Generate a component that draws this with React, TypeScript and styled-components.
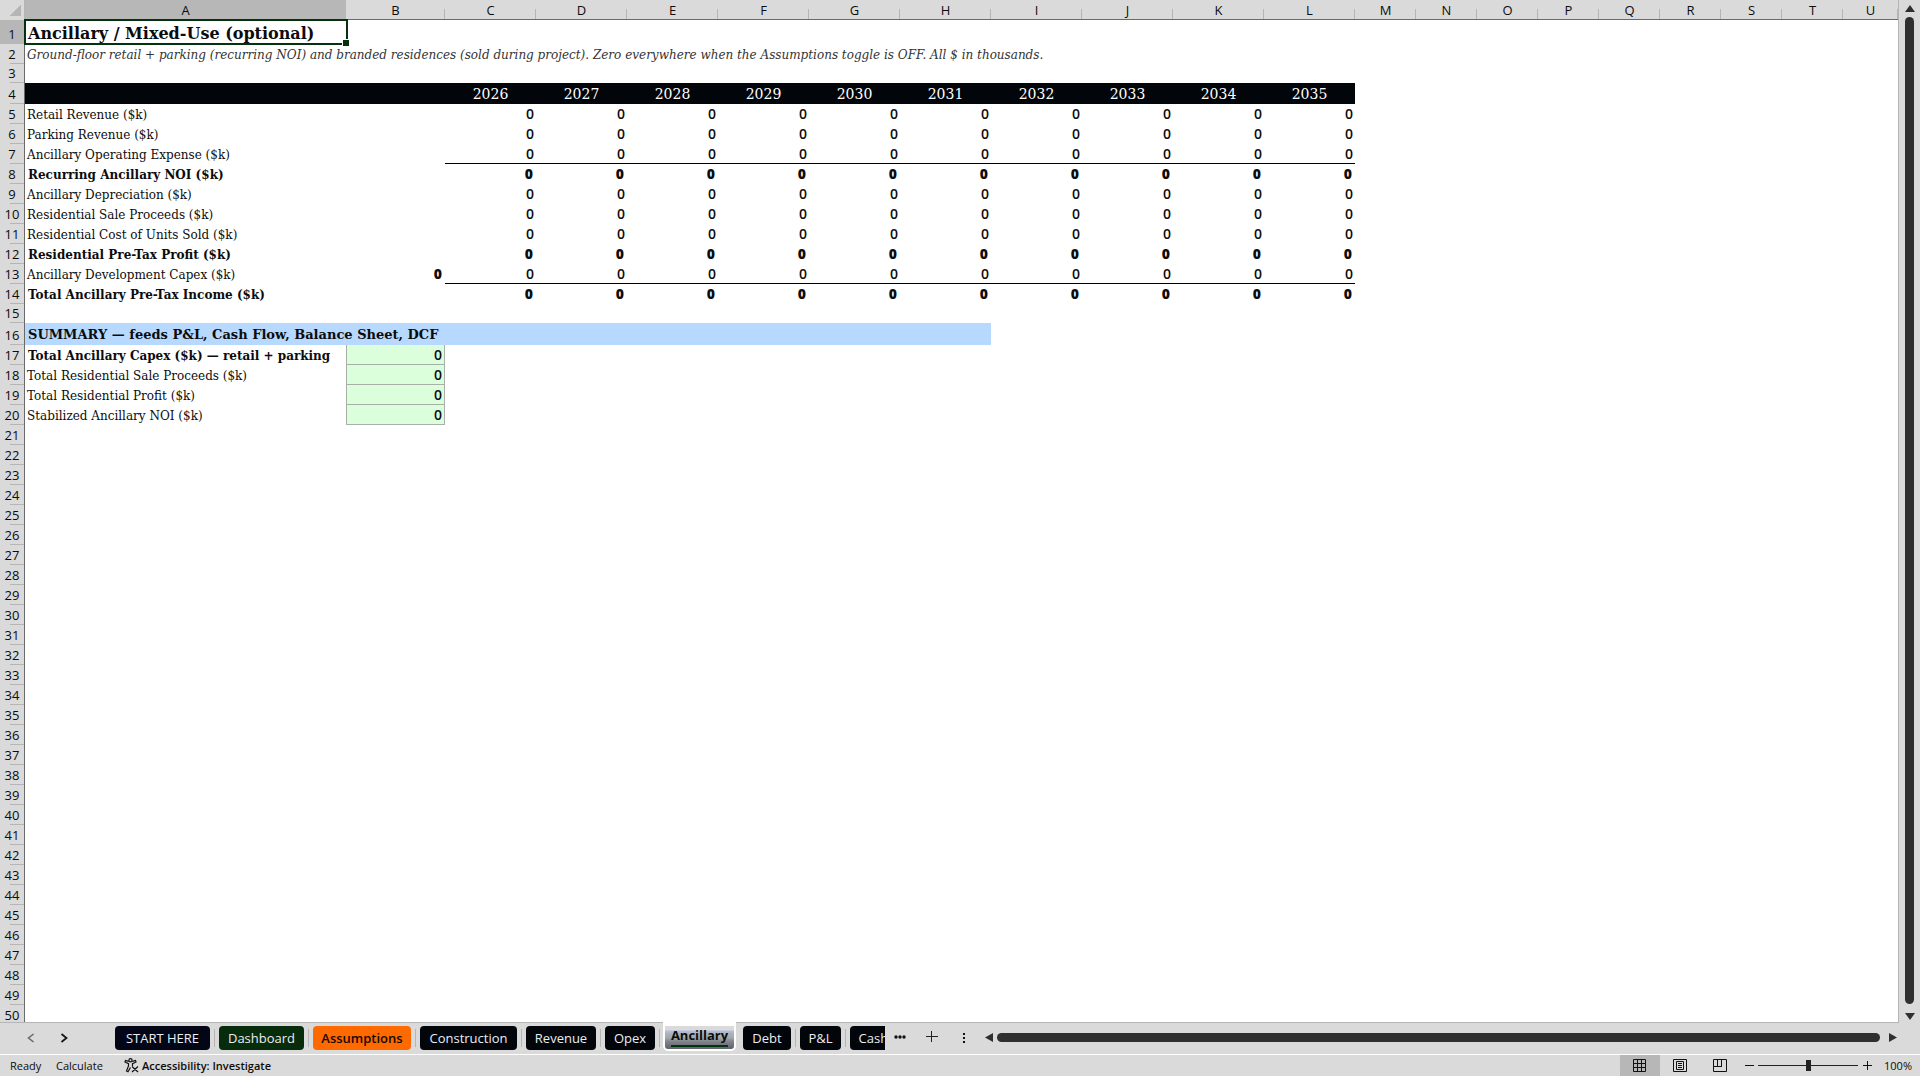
import React from "react";
import styled, { createGlobalStyle, css } from "styled-components";

const UI = '"Open Sans", "Noto Sans", sans-serif';
const SERIF = '"DejaVu Serif", "Liberation Serif", serif';
const CHROME = "#dadada";
const LINE = "#b5b5b5";
const INK = "#2f2f2f";
const GREEN = "#06310f";

const Global = createGlobalStyle`
  * { box-sizing: border-box; }
  html, body { margin: 0; height: 100%; overflow: hidden; }
  body { background: ${CHROME}; font-family: ${UI}; color: #0c0c0c; }
  button { margin: 0; padding: 0; border: 0; background: none; font: inherit; color: inherit; cursor: pointer; }
`;

const Shell = styled.div`
  display: flex;
  flex-direction: column;
  height: 100vh;
`;

const Workspace = styled.div`
  display: flex;
  flex: 1;
  min-height: 0;
`;

const SheetPane = styled.main`
  flex: 1;
  min-width: 0;
  overflow: hidden;
  background: #fff;
  border-right: 1px solid ${LINE};
`;

const Grid = styled.table`
  width: 100%;
  table-layout: fixed;
  border-collapse: separate;
  border-spacing: 0;
  font-size: 13px;
  line-height: 18px;
`;

const Col = styled.col<{ $w?: number }>`
  width: ${(p) => (p.$w ? `${p.$w}px` : "auto")};
`;

const ColHead = styled.th<{ $active?: boolean }>`
  height: 20px;
  padding: 2px 0 0;
  font-weight: 400;
  line-height: 17px;
  border-bottom: 1px solid #6a6a6a;
  background: ${(p) =>
    p.$active
      ? "#b7b7b7"
      : `linear-gradient(${LINE}, ${LINE}) right bottom / 1px 10px no-repeat ${CHROME}`};
`;

const Corner = styled.td`
  padding: 0;
  background: linear-gradient(135deg, transparent 50%, ${LINE} 50%) 10px 5px / 11px 11px no-repeat ${CHROME};
  border-right: 1px solid ${LINE};
`;

const RowHead = styled.th<{ $active?: boolean }>`
  padding: 0 0 1px;
  font-weight: 400;
  line-height: 18px;
  vertical-align: bottom;
  border-right: 1px solid #6a6a6a;
  background: ${(p) =>
    p.$active
      ? "#b7b7b7"
      : `linear-gradient(${LINE}, ${LINE}) right bottom / 14px 1px no-repeat ${CHROME}`};
`;

const Row = styled.tr<{ $h: number }>`
  height: ${(p) => p.$h}px;
`;

type Tone = "plain" | "bold" | "title" | "note" | "section";

const tones = {
  plain: css`font-size: 12px; padding-left: 2px;`,
  bold: css`font-size: 12px; font-weight: 700; padding-left: 3px;`,
  title: css`font-size: 16px; font-weight: 700; padding: 3px 0 0 3px;`,
  note: css`font-size: 12px; font-style: italic; color: #333; padding-left: 2px;`,
  section: css`font-size: 13px; font-weight: 700; padding-left: 3px; background: #b7d9ff;`,
};

const Label = styled.td<{ $tone: Tone }>`
  position: relative;
  padding: 1px 0 0;
  font-family: ${SERIF};
  white-space: nowrap;
  ${(p) => tones[p.$tone]}
`;

const Selection = styled.span`
  position: absolute;
  inset: -1px -2px -1px -1px;
  border: 2px solid ${GREEN};
  &::after {
    content: "";
    position: absolute;
    right: -3px;
    bottom: -3px;
    width: 6px;
    height: 6px;
    background: ${GREEN};
    border: 1px solid #fff;
    border-width: 1px 0 0 1px;
  }
`;

const Value = styled.td<{ $bold?: boolean; $ruled?: boolean; $input?: boolean }>`
  padding: 0 2px 0 0;
  text-align: right;
  font-size: 14px;
  font-weight: ${(p) => (p.$bold ? 800 : 600)};
  ${(p) => p.$bold && "padding-right: 3px;"}
  ${(p) => p.$ruled && "border-bottom: 1px solid #000;"}
  ${(p) =>
    p.$input &&
    "background: #dbffdb; border: 1px solid #a9b0a9; border-top: 0; padding-right: 2px;"}
`;

const Year = styled.th`
  padding: 0;
  background: #02050a;
  color: #fff;
  font-family: ${SERIF};
  font-size: 14px;
  font-weight: 400;
`;

const Blank = styled.td`
  padding: 0;
`;

const VScroll = styled.div`
  display: flex;
  flex-direction: column;
  align-items: center;
  gap: 5px;
  width: 21px;
  padding: 5px 0 2px;
`;

const ArrowButton = styled.button`
  display: flex;
  align-items: center;
  justify-content: center;
  flex: none;
`;

const VThumb = styled.div`
  flex: 1;
  width: 9px;
  margin-bottom: 4px;
  border-radius: 5px;
  background: ${INK};
`;

const TabBar = styled.nav`
  display: flex;
  align-items: stretch;
  height: 33px;
  border-bottom: 1px solid #fff;
  background: linear-gradient(${LINE}, ${LINE}) left top / calc(100% - 21px) 1px no-repeat;
`;

const NavButtons = styled.div`
  display: flex;
  align-items: center;
  gap: 24px;
  width: 115px;
  padding: 0 0 1px 26px;
`;

const IconButton = styled.button<{ $w: number }>`
  display: flex;
  align-items: center;
  justify-content: center;
  flex: none;
  width: ${(p) => p.$w}px;
`;

const Tabs = styled.div`
  display: flex;
  flex: none;
  align-items: flex-start;
  width: 770px;
  overflow: hidden;
`;

const Divider = styled.span`
  flex: none;
  width: 1px;
  height: 18px;
  margin: 7px 4px 0;
  background: ${LINE};
`;

const Tab = styled.button<{ $w: number; $bg?: string; $fg?: string; $heavy?: boolean }>`
  flex: none;
  width: ${(p) => p.$w}px;
  height: 24px;
  margin-top: 4px;
  padding: 0 4px;
  border-radius: 4px;
  background: ${(p) => p.$bg ?? "#02050a"};
  color: ${(p) => p.$fg ?? "#e9eef6"};
  font-size: 13px;
  font-weight: ${(p) => (p.$heavy ? 600 : 400)};
  line-height: 24px;
  white-space: nowrap;
`;

const ActiveWrap = styled.span`
  flex: none;
  width: 73px;
  height: 29px;
  margin: 0 7px 0 -1px;
  padding: 4px 2px 2px;
  border-radius: 0 0 5px 5px;
  background: #fff;
`;

const ActiveTab = styled.button`
  display: flex;
  justify-content: center;
  width: 69px;
  height: 23px;
  border-radius: 0 0 3px 3px;
  background: linear-gradient(#dadada 0 4px, #b3bce4 5px, #a9b3b4 8px, #a3a7ac 12px, #83868d 15px, #62656e 22px);
  font-size: 13px;
  font-weight: 700;
  line-height: 19px;
`;

const ActiveName = styled.span`
  height: 21px;
  border-bottom: 2px solid ${GREEN};
`;

const HScroll = styled.div`
  display: flex;
  flex: 1;
  align-items: center;
  gap: 4px;
  padding: 0 23px 1px 5px;
`;

const HThumb = styled.div`
  flex: 1;
  height: 9px;
  margin-right: 5px;
  border-radius: 5px;
  background: ${INK};
`;

const StatusBar = styled.footer`
  display: flex;
  align-items: stretch;
  height: 21px;
  padding: 0 8px 0 10px;
  font-size: 11px;
  line-height: 22px;
`;

const StatusText = styled.span<{ $w: number }>`
  width: ${(p) => p.$w}px;
`;

const Access = styled.button`
  display: flex;
  align-items: center;
  gap: 3px;
  margin-left: 20px;
  font-weight: 600;
  line-height: 20px;
`;

const Spacer = styled.span`
  flex: 1;
`;

const ViewButton = styled.button<{ $on?: boolean }>`
  display: flex;
  align-items: center;
  justify-content: center;
  width: 40px;
  background: ${(p) => (p.$on ? "#b7b7b7" : "transparent")};
`;

const Zoom = styled.div`
  display: flex;
  align-items: center;
  gap: 4px;
  margin-left: 4px;
`;

const Slider = styled.input`
  appearance: none;
  width: 100px;
  height: 20px;
  margin: 0;
  background: linear-gradient(#222, #222) center / 100% 1px no-repeat;
  &::-webkit-slider-thumb {
    appearance: none;
    width: 5px;
    height: 11px;
    background: #222;
  }
`;

const Percent = styled.span`
  width: 40px;
  text-align: right;
`;

const COLS: [string, number?][] = [
  ["A", 321], ["B", 99],
  ..."CDEFGHIJKL".split("").map((c) => [c, 91] as [string, number]),
  ..."MNOPQRST".split("").map((c) => [c, 61] as [string, number]),
  ["U"],
];
const YEARS = [2026, 2027, 2028, 2029, 2030, 2031, 2032, 2033, 2034, 2035];

type Line = {
  label?: string;
  tone?: Tone;
  h?: number;
  values?: boolean;
  bold?: boolean;
  ruled?: boolean;
  total?: boolean;
  input?: boolean;
  years?: boolean;
  span?: number;
};

const LINES: Line[] = [
  { label: "Ancillary / Mixed-Use (optional)", tone: "title", h: 24 },
  {
    label:
      "Ground-floor retail + parking (recurring NOI) and branded residences (sold during project). Zero everywhere when the Assumptions toggle is OFF. All $ in thousands.",
    tone: "note",
    span: 12,
  },
  { h: 19 },
  { years: true, h: 21 },
  { label: "Retail Revenue ($k)", values: true },
  { label: "Parking Revenue ($k)", values: true },
  { label: "Ancillary Operating Expense ($k)", values: true, ruled: true },
  { label: "Recurring Ancillary NOI ($k)", values: true, bold: true },
  { label: "Ancillary Depreciation ($k)", values: true },
  { label: "Residential Sale Proceeds ($k)", values: true },
  { label: "Residential Cost of Units Sold ($k)", values: true },
  { label: "Residential Pre-Tax Profit ($k)", values: true, bold: true },
  { label: "Ancillary Development Capex ($k)", values: true, total: true, ruled: true },
  { label: "Total Ancillary Pre-Tax Income ($k)", values: true, bold: true },
  { h: 19 },
  { label: "SUMMARY — feeds P&L, Cash Flow, Balance Sheet, DCF", tone: "section", h: 22, span: 8 },
  { label: "Total Ancillary Capex ($k) — retail + parking", bold: true, input: true },
  { label: "Total Residential Sale Proceeds ($k)", input: true },
  { label: "Total Residential Profit ($k)", input: true },
  { label: "Stabilized Ancillary NOI ($k)", input: true },
  ...Array.from({ length: 30 }, () => ({})),
];

function SheetRow({ line, n }: { line: Line; n: number }) {
  const { label, tone, h = 20, values, bold, ruled, total, input, years, span } = line;
  return (
    <Row $h={h}>
      <RowHead scope="row" $active={n === 1}>{n}</RowHead>
      {years && (
        <>
          <Year colSpan={2} />
          {YEARS.map((y) => <Year key={y} scope="col">{y}</Year>)}
        </>
      )}
      {label && (
        <Label $tone={tone ?? (bold ? "bold" : "plain")} colSpan={span}>
          {label}
          {n === 1 && <Selection />}
        </Label>
      )}
      {input && <Value $input>0</Value>}
      {values && (total ? <Value $bold>0</Value> : <Blank />)}
      {values && YEARS.map((y) => <Value key={y} $bold={bold} $ruled={ruled}>0</Value>)}
      {!label && !years && <Blank colSpan={21} />}
    </Row>
  );
}

const ARROWS = {
  up: "M5 0 L10 7 H0 Z",
  down: "M0 0 H10 L5 7 Z",
  left: "M8 0 V9 L0 4.5 Z",
  right: "M0 0 V9 L8 4.5 Z",
};

function Arrow({ dir }: { dir: keyof typeof ARROWS }) {
  const flat = dir === "up" || dir === "down";
  return (
    <ArrowButton aria-label={`Scroll ${dir}`}>
      <svg width={flat ? 10 : 8} height={flat ? 7 : 9}>
        <path d={ARROWS[dir]} fill={INK} />
      </svg>
    </ArrowButton>
  );
}

const TABS_LEFT = [
  { name: "START HERE", w: 95, bg: "#020617" },
  { name: "Dashboard", w: 85, bg: "#062c0b" },
  { name: "Assumptions", w: 98, bg: "#ff6a00", fg: "#140800", heavy: true },
  { name: "Construction", w: 97 },
  { name: "Revenue", w: 70 },
  { name: "Opex", w: 50 },
];
const TABS_RIGHT = [
  { name: "Debt", w: 48 },
  { name: "P&L", w: 41 },
  { name: "Cash Flow", w: 78 },
];

export default function App() {
  return (
    <Shell>
      <Global />
      <Workspace>
        <SheetPane>
          <Grid>
            <colgroup>
              <Col $w={25} />
              {COLS.map(([c, w]) => <Col key={c} $w={w} />)}
            </colgroup>
            <thead>
              <tr>
                <Corner />
                {COLS.map(([c]) => <ColHead key={c} scope="col" $active={c === "A"}>{c}</ColHead>)}
              </tr>
            </thead>
            <tbody>
              {LINES.map((line, i) => <SheetRow key={i} line={line} n={i + 1} />)}
            </tbody>
          </Grid>
        </SheetPane>
        <VScroll>
          <Arrow dir="up" />
          <VThumb />
          <Arrow dir="down" />
        </VScroll>
      </Workspace>
      <TabBar aria-label="Sheets">
        <NavButtons>
          <IconButton $w={9} aria-label="Previous sheet">
            <svg width="8" height="10" fill="none" stroke="#666" strokeWidth="1.5"><path d="M6.500 1 L1.500 5 L6.500 9" /></svg>
          </IconButton>
          <IconButton $w={9} aria-label="Next sheet">
            <svg width="8" height="10" fill="none" stroke="#111" strokeWidth="1.700"><path d="M1.500 1 L6.500 5 L1.500 9" /></svg>
          </IconButton>
        </NavButtons>
        <Tabs>
          {TABS_LEFT.map((t) => (
            <React.Fragment key={t.name}>
              <Tab $w={t.w} $bg={t.bg} $fg={t.fg} $heavy={t.heavy}>{t.name}</Tab>
              <Divider />
            </React.Fragment>
          ))}
          <ActiveWrap>
            <ActiveTab aria-current="page"><ActiveName>Ancillary</ActiveName></ActiveTab>
          </ActiveWrap>
          {TABS_RIGHT.map((t, i) => (
            <React.Fragment key={t.name}>
              {i > 0 && <Divider />}
              <Tab $w={t.w}>{t.name}</Tab>
            </React.Fragment>
          ))}
        </Tabs>
        <IconButton $w={30} aria-label="More sheets">
          <svg width="12" height="6" fill="#111"><circle cx="2" cy="2" r="1.700" /><circle cx="6" cy="2" r="1.700" /><circle cx="10" cy="2" r="1.700" /></svg>
        </IconButton>
        <IconButton $w={34} aria-label="Add sheet">
          <svg width="12" height="14" stroke="#222" strokeWidth="1"><path d="M0 5.500 H12 M5.500 0 V11" /></svg>
        </IconButton>
        <IconButton $w={31} aria-label="Resize tab bar">
          <svg width="3" height="10" fill="#111"><path d="M0 0h2v2H0zM0 4h2v2H0zM0 8h2v2H0z" /></svg>
        </IconButton>
        <HScroll>
          <Arrow dir="left" />
          <HThumb />
          <Arrow dir="right" />
        </HScroll>
      </TabBar>
      <StatusBar>
        <StatusText $w={46}>Ready</StatusText>
        <StatusText $w={48}>Calculate</StatusText>
        <Access>
          <svg width="15" height="15" fill="none" stroke="#111" strokeWidth="1.200">
            <circle cx="6.500" cy="2.200" r="1.600" />
            <path d="M4.800 3.400 L1.500 2.400 L1 4 L4.500 5.600 V8 L2.500 13 L4 13.800 L6.500 9.500 M8.200 3.400 L11.500 2.400 L12 4 L8.500 5.600 V8 M8 8.500 L14 14 M14 8.500 L8 14" />
          </svg>
          Accessibility: Investigate
        </Access>
        <Spacer />
        <ViewButton $on aria-label="Normal view">
          <svg width="14" height="14" fill="none" stroke="#111"><path d="M.5 .5h12v12H.5z M4.500 0v13 M8.500 0v13 M0 4.500h13 M0 8.500h13" /></svg>
        </ViewButton>
        <ViewButton aria-label="Page layout">
          <svg width="14" height="14" fill="none" stroke="#111"><path d="M.5 .5h13v12H.5z M3.500 2.500h7v8h-7z M5 4.500h4 M5 6.500h4 M5 8.500h4" /></svg>
        </ViewButton>
        <ViewButton aria-label="Page break preview">
          <svg width="14" height="14" fill="none" stroke="#111"><path d="M.5 .5h13v12H.5z M4.500 0v7.500 M8.500 0v7.500 M0 7.500h9" /></svg>
        </ViewButton>
        <Zoom>
          <IconButton $w={10} aria-label="Zoom out">
            <svg width="9" height="9" stroke="#111"><path d="M0 4.500h9" /></svg>
          </IconButton>
          <Slider type="range" min={10} max={190} defaultValue={100} aria-label="Zoom" />
          <IconButton $w={10} aria-label="Zoom in">
            <svg width="9" height="9" stroke="#111"><path d="M0 4.500h9M4.500 0v9" /></svg>
          </IconButton>
        </Zoom>
        <Percent>100%</Percent>
      </StatusBar>
    </Shell>
  );
}
